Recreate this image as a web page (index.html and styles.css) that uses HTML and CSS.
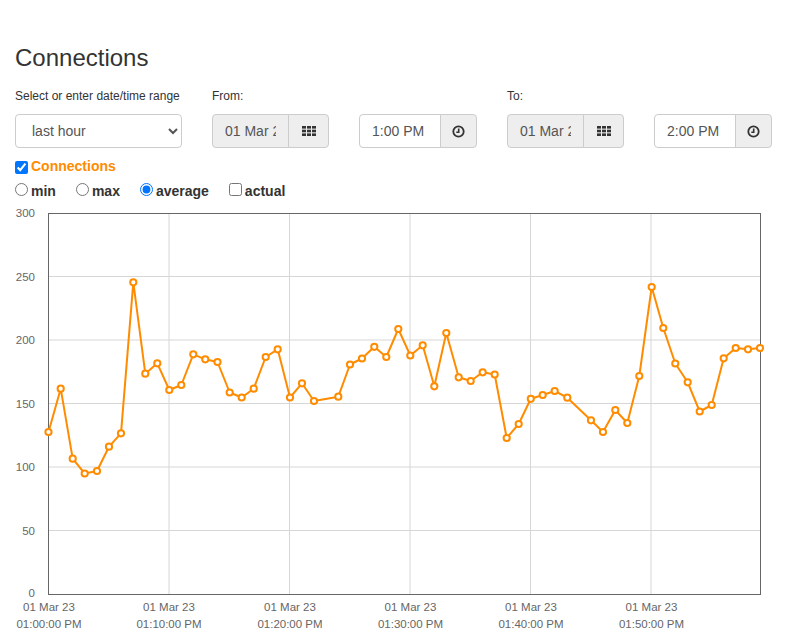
FILE: index.html
```html
<!DOCTYPE html>
<html lang="en">
<head>
<meta charset="utf-8">
<title>Connections</title>
<link rel="stylesheet" href="styles.css">
</head>
<body>
<div class="page">
  <h3 class="title">Connections</h3>

  <div class="range-row">
    <div class="field">
      <label class="field-label">Select or enter date/time range</label>
      <select class="range-select">
        <option>last hour</option>
        <option>last day</option>
        <option>last week</option>
      </select>
    </div>
    <div class="field">
      <label class="field-label">From:</label>
      <div class="input-group">
        <input class="date-input" type="text" value="01 Mar 2023" readonly>
        <button class="addon addon-date" type="button">
          <svg width="14" height="10" viewBox="0 0 14 10"><g fill="#333"><rect x="0" y="0" width="4" height="2.6"/><rect x="5" y="0" width="4" height="2.6"/><rect x="10" y="0" width="4" height="2.6"/><rect x="0" y="3.7" width="4" height="2.6"/><rect x="5" y="3.7" width="4" height="2.6"/><rect x="10" y="3.7" width="4" height="2.6"/><rect x="0" y="7.4" width="4" height="2.6"/><rect x="5" y="7.4" width="4" height="2.6"/><rect x="10" y="7.4" width="4" height="2.6"/></g></svg>
        </button>
      </div>
    </div>
    <div class="field">
      <span class="field-label"></span>
      <div class="input-group">
        <input class="time-input" type="text" value="1:00 PM">
        <button class="addon addon-time" type="button">
          <svg width="13" height="13" viewBox="0 0 13 13"><circle cx="6.5" cy="6.5" r="5.2" fill="none" stroke="#333" stroke-width="1.8"/><path d="M6.7 3.4 V7.2 H4.3" fill="none" stroke="#333" stroke-width="1.6"/></svg>
        </button>
      </div>
    </div>
    <div class="field">
      <label class="field-label">To:</label>
      <div class="input-group">
        <input class="date-input" type="text" value="01 Mar 2023" readonly>
        <button class="addon addon-date" type="button">
          <svg width="14" height="10" viewBox="0 0 14 10"><g fill="#333"><rect x="0" y="0" width="4" height="2.6"/><rect x="5" y="0" width="4" height="2.6"/><rect x="10" y="0" width="4" height="2.6"/><rect x="0" y="3.7" width="4" height="2.6"/><rect x="5" y="3.7" width="4" height="2.6"/><rect x="10" y="3.7" width="4" height="2.6"/><rect x="0" y="7.4" width="4" height="2.6"/><rect x="5" y="7.4" width="4" height="2.6"/><rect x="10" y="7.4" width="4" height="2.6"/></g></svg>
        </button>
      </div>
    </div>
    <div class="field">
      <span class="field-label"></span>
      <div class="input-group">
        <input class="time-input" type="text" value="2:00 PM">
        <button class="addon addon-time" type="button">
          <svg width="13" height="13" viewBox="0 0 13 13"><circle cx="6.5" cy="6.5" r="5.2" fill="none" stroke="#333" stroke-width="1.8"/><path d="M6.7 3.4 V7.2 H4.3" fill="none" stroke="#333" stroke-width="1.6"/></svg>
        </button>
      </div>
    </div>
  </div>

  <div class="series-row">
    <label class="series-label"><input class="series-check" type="checkbox" checked>Connections</label>
  </div>

  <div class="mode-row">
    <label class="mode"><input class="mode-input" type="radio" name="mode">min</label>
    <label class="mode"><input class="mode-input" type="radio" name="mode">max</label>
    <label class="mode"><input class="mode-input" type="radio" name="mode" checked>average</label>
    <label class="mode"><input class="mode-input" type="checkbox">actual</label>
  </div>

  <svg class="chart" width="787" height="430" viewBox="0 204 787 430">
    <defs>
      <marker id="pt" markerUnits="userSpaceOnUse" markerWidth="10" markerHeight="10" refX="5" refY="5" viewBox="0 0 10 10">
        <circle cx="5" cy="5" r="3.1" fill="#fff" stroke="#ff8c00" stroke-width="2"/>
      </marker>
    </defs>
    <g class="grid">
      <line x1="48" y1="276.5" x2="760" y2="276.5"/>
      <line x1="48" y1="340" x2="760" y2="340"/>
      <line x1="48" y1="403.5" x2="760" y2="403.5"/>
      <line x1="48" y1="467" x2="760" y2="467"/>
      <line x1="48" y1="530.5" x2="760" y2="530.5"/>
      <line x1="169" y1="213" x2="169" y2="594"/>
      <line x1="289.5" y1="213" x2="289.5" y2="594"/>
      <line x1="410" y1="213" x2="410" y2="594"/>
      <line x1="530.5" y1="213" x2="530.5" y2="594"/>
      <line x1="651" y1="213" x2="651" y2="594"/>
    </g>
    <rect class="frame" x="48.5" y="213.5" width="712" height="381"/>
    <g class="ylabels">
      <text x="35" y="217">300</text>
      <text x="35" y="280.5">250</text>
      <text x="35" y="344">200</text>
      <text x="35" y="407.5">150</text>
      <text x="35" y="471">100</text>
      <text x="35" y="534.5">50</text>
      <text x="35" y="597">0</text>
    </g>
    <g class="xlabels">
      <text x="49" y="611">01 Mar 23</text><text x="49" y="628">01:00:00 PM</text>
      <text x="169" y="611">01 Mar 23</text><text x="169" y="628">01:10:00 PM</text>
      <text x="290" y="611">01 Mar 23</text><text x="290" y="628">01:20:00 PM</text>
      <text x="410.5" y="611">01 Mar 23</text><text x="410.5" y="628">01:30:00 PM</text>
      <text x="531" y="611">01 Mar 23</text><text x="531" y="628">01:40:00 PM</text>
      <text x="651.5" y="611">01 Mar 23</text><text x="651.5" y="628">01:50:00 PM</text>
    </g>
    <polyline class="series" points="48.5,432 60.7,388.7 72.7,458.7 84.7,473.5 97,471 109,446.7 121,433.3 133.3,282.3 145.3,373.7 157.3,363.3 169.3,390 181.3,385 193.3,354.3 205.3,359.3 217.5,362 229.7,392.5 241.7,397.5 253.7,388.7 265.7,357 277.7,349.3 290,397.5 302,383.3 314,401 338.3,396.7 350,364.5 362,358.5 374.3,346.8 386.3,357 398.3,329 410.3,355.5 422.7,345.3 434.3,386.3 446.3,333 458.7,377.3 470.7,381 482.7,372.3 494.7,374.5 506.7,438 518.7,424 530.8,398.8 542.7,395 554.7,391 567.3,397.7 591,420.3 603,432 615.3,410 627.3,423 639.3,376 651.7,287 663.3,328 675.3,363.5 687.7,382.3 699.7,411.5 711.7,405 723.7,358.3 735.7,348 748,349.3 760,348"/>
  </svg>
</div>
</body>
</html>
```

FILE: styles.css
```css
* { box-sizing: border-box; }

body {
  margin: 0;
  font-family: "Liberation Sans", Arial, Helvetica, sans-serif;
  font-size: 14px;
  color: #333;
  background: #fff;
}

.page {
  padding: 0 15px;
}

.title {
  margin: 45px 0 0;
  font-size: 24px;
  font-weight: normal;
  line-height: 26px;
  color: #333;
}

.range-row {
  display: flex;
  gap: 30px;
  margin-top: 17px;
}

.field {
  display: flex;
  flex-direction: column;
}

.field-label {
  display: block;
  height: 17px;
  font-size: 12px;
  line-height: 17px;
  font-weight: normal;
  margin-bottom: 9px;
}

.range-select {
  width: 167px;
  height: 34px;
  padding: 6px 12px;
  font-family: inherit;
  font-size: 14px;
  color: #555;
  background: #fff;
  border: 1px solid #ccc;
  border-radius: 4px;
}

.input-group {
  display: flex;
  height: 34px;
}

.input-group input {
  height: 34px;
  padding: 6px 12px;
  font-family: inherit;
  font-size: 14px;
  color: #555;
  border: 1px solid #ccc;
  border-radius: 4px 0 0 4px;
  outline: none;
}

.date-input {
  width: 77px;
  background: #eee;
}

.time-input {
  width: 82px;
  background: #fff;
}

.addon {
  display: flex;
  align-items: center;
  justify-content: center;
  height: 34px;
  margin-left: -1px;
  padding: 0;
  background: #eee;
  border: 1px solid #ccc;
  border-radius: 0 4px 4px 0;
}

.addon-date { width: 41px; }
.addon-time { width: 37px; }

.series-row {
  margin-top: 8px;
  line-height: 20px;
}

.series-label {
  font-weight: bold;
  color: #ff8c00;
}

.series-check {
  width: 13px;
  height: 13px;
  margin: 5px 3px 0 0;
  vertical-align: top;
}

.mode-row {
  margin-top: 5px;
  line-height: 20px;
  display: flex;
}

.mode {
  font-weight: bold;
  color: #333;
  margin-right: 20px;
}

.mode-input {
  width: 13px;
  height: 13px;
  margin: 2px 3px 0 0;
  vertical-align: top;
}

.chart {
  display: block;
  margin: 3px -15px 0;
}

.grid line {
  stroke: #d6d6d6;
  stroke-width: 1;
}

.frame {
  fill: none;
  stroke: #666;
  stroke-width: 1;
}

.ylabels text {
  font-family: "Liberation Sans", Arial, sans-serif;
  font-size: 11.5px;
  fill: #666;
  text-anchor: end;
}

.xlabels text {
  font-family: "Liberation Sans", Arial, sans-serif;
  font-size: 11.5px;
  fill: #666;
  text-anchor: middle;
}

.series {
  fill: none;
  stroke: #ff8c00;
  stroke-width: 2;
  stroke-linejoin: round;
  marker-start: url(#pt);
  marker-mid: url(#pt);
  marker-end: url(#pt);
}
```
